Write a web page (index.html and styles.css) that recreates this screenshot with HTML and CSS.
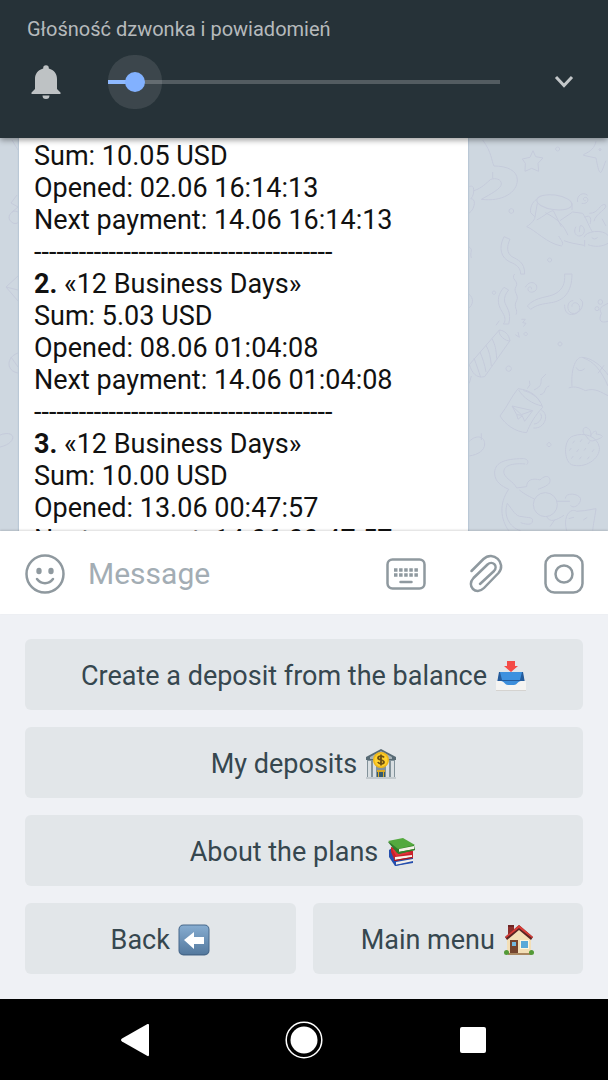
FILE: index.html
```html
<!DOCTYPE html>
<html lang="en">
<head>
<meta charset="utf-8">
<meta name="viewport" content="width=device-width, initial-scale=1">
<title>Deposits</title>
<link rel="stylesheet" href="styles.css">
</head>
<body>
<section class="volume" lang="pl">
  <label class="volume-label" for="volume">Głośność dzwonka i powiadomień</label>
  <div class="volume-row">
    <svg class="bell" viewBox="0 0 30 34" aria-hidden="true"><path d="M12.200 3.500V3a2.800 2.800 0 0 1 5.600 0v.5C23 4.900 26 8.800 26 14v10l3.500 3.600V29H.5v-1.400L4 24V14C4 8.800 7 4.900 12.200 3.500zM11.500 30.500h7a3.500 3.500 0 0 1-7 0z"/></svg>
    <input class="slider" id="volume" type="range" min="0" max="200" value="9">
    <button class="expand" type="button" aria-label="Rozwiń"><svg viewBox="0 0 20 14"><path d="M2 2l8 8.500L18 2"/></svg></button>
  </div>
</section>

<main class="chat">
  <svg class="wallpaper" viewBox="0 0 608 393" aria-hidden="true">
    <g transform="translate(440 -8) scale(.3333)">
      <path d="M128 30c28 38 26 62 34 78 40 0 70 14 70 42 0 38-46 66-108 58 28-16 60-32 60-46 0-16-18-18-32-14-14 12-26 26-50 34M158 126v20M279 62l8 18 22 4-15 16 2 24-21-9-20 9 1-24-9-13 23-5zM430 74c22-10 34-20 38-40M430 76l38 8c4 20 8 44 14 44 8-8 10-26 16-36M480 56a3 3 0 1 0 .1 0M353 51a6 6 0 1 0 .1 0M214 236a7 7 0 1 0 .1 0M329 384a6 6 0 1 0 .1 0M162 483a5 5 0 1 0 .1 0M257 607a5 5 0 1 0 .1 0M360 636a6 6 0 1 0 .1 0M206 708a8 8 0 1 0 .1 0M327 938a6 6 0 1 0 .1 0"/>
      <ellipse cx="343" cy="217" rx="53" ry="22" transform="rotate(8 343 217)"/>
      <path d="M290 208c-14 8-20 26-18 40l12 12M292 220l-8 46c-8 14-16 18-24 24 26 10 60 50 104 58 10-6 0-16-8-30M290 270c20-10 40-28 50-28l24 48M316 248c40 20 56 40 68 68M360 272l38-26 30 4c14 20 20 44 30 56M396 240v-20M372 332c20 8 40 10 60 14M434 262c20-12 20 10 16 20M448 250c30 0 30-30 48-26 10 12-30 26-34 50M425 220c20 4 24-16 12-18-10 0-8 12 0 10M413 216c-4-20 16-32 30-20M432 322a38 20 0 0 1 72-6M444 344c20 8 44 6 60-4M408 290c-12 20 6 36 20 24 12-12 0-32-8-26l-2 18M455 322q8 10 18 0M434 350v-20M486 266l12 22"/>
      <path d="M210 328l-18-8c-18 36-8 64 18 76 20 8 32 18 32 36h12c0-36-20-42-38-52-16-10-16-32-6-52zM224 432c-14 16 14 20 4 38-10 16 10 24 2 42-12 20 6 26-2 42M206 480l-14-8c-26 30-18 54-4 76 10 16 8 28 2 34h16c10-34-8-52-12-66-2-14 2-24 12-36zM256 472c12-24 38-14 34 4-4 14-28 14-26 0 2-8 14-6 10 2M374 432h22c0 54-24 80-62 86-26 4-44 6-62 20-4-2-6-8-10-10 26-30 64-24 86-38 20-12 28-30 26-58zM400 512c-20-2-22 34-4 38 20 4 30-16 18-28-8-8-20-2-18 8M374 524c-2 50 58 30 54-8l-8-10M465 536a6 6 0 1 0 12 0 6 6 0 1 0-12 0M474 516a7 7 0 1 0 14 0 7 7 0 1 0-14 0M504 520c-18 10-30 12-20 30-10 24 0 30 20 24M244 568h12l-8 10 10 2-8 10M226 614l12 8-4-16M168 586l10-14"/>
      <path d="M178 600l-90 104c8 24 20 42 46 36l76-108c-4-20-16-30-32-32zM178 600c-6 14 20 36 32 32M156 626c10 20 12 30 14 60M138 646c10 18 14 36 16 62M120 666c8 20 14 36 18 60M102 684c8 22 14 40 20 58M88 760l6-22M396 770c-4-60 14-88 28-88 30 0 60 24 84 58M386 774c20-8 38 2 50 8 30-10 48 6 70 16M430 684c30 10 52 34 74 84M408 712q10 18 26 4M474 730l18-24"/>
      <path d="M234 776c-20 24-32 54-54 82 16 26 46 48 80 50 10-26 24-50 48-76-10-30-34-52-74-56zM236 780c14 24 42 42 70 48M250 782c20 4 42 18 50 34M304 840c26 14 10 58-24 54M300 850c12 10-2 32-18 32M216 828l62 14-24 32-8-18-16-2zM216 828l28 26 34-12M230 854l4 14 12-10M262 776l8-12-2-12M282 780c26-12 20-22 22-34l14-14M300 794c20-2 10-22 28-26M88 934c22-22 46-14 46 8 0 20-20 32-46 36M124 930v-20M88 170c20-10 14 30 4 36 20 0 10 36-6 44M86 350c16 10 2 14 8 34M86 492c18 12 12 36 0 42"/>
      <path d="M400 918c-30 8-30 72-6 86 40 14 88-18 84-52-6-34-46-46-78-34zM440 920c-20-14-8-34 2-26 10 4 12 18 10 24 8-18 22-18 16-6 30 4 20 12-2 18-10 6-20 2-26-10M398 940l6-8M420 936l6-8M444 942l6-8M388 962l6-8M410 966l6-8M432 962l6-8M456 966l6-8M394 986l6-8M418 988l6-8M442 988l6-8"/>
      <path d="M260 1004c8-8 2-18-10-18-60 0-88 14-86 46 2 24 20 36 42 46-30 44-24 90 0 124M256 1002c-50-4-68 10-64 28 6 18 28 24 38 44l30-4c0-22 20-26 40-20 18-18 32-10 30 4 0 12-26 20-36 24M238 1080c20 16 32 20 46 28M202 1120c-12 34 4 72 40 82M202 1120c16 20 24 40 44 40 20 4 38 0 30 18-4 8-24 4-34 0M350 1114h40M376 1106c0-20 40-16 46 0 0 20-24 32-30 20M380 1202c-12-42 10-70 30-58l24-2 34-6c-4 30-8 46-10 66M386 1166l16-4M430 1170l12-8M320 1160c10 20 30 10 52-4M330 1190l14-20"/>
      <circle cx="316" cy="1124" r="36"/>
    </g>
    <g transform="translate(0 2)"><path d="M12 0l6 10M17 55l-6 8 7 4-6 5M18 72a6 6 0 1 0 1 10M18 136L6 147l12 14M6 147l12 3M18 213c-12 4-12 18 0 20M11 217l7 10M0 295c16-6 18 8 0 12"/></g>
  </svg>
  <article class="bubble">
    <p>Sum: 10.05 USD</p>
    <p>Opened: 02.06 16:14:13</p>
    <p>Next payment: 14.06 16:14:13</p>
    <p>----------------------------------------</p>
    <p><b>2.</b> «12 Business Days»</p>
    <p>Sum: 5.03 USD</p>
    <p>Opened: 08.06 01:04:08</p>
    <p>Next payment: 14.06 01:04:08</p>
    <p>----------------------------------------</p>
    <p><b>3.</b> «12 Business Days»</p>
    <p>Sum: 10.00 USD</p>
    <p>Opened: 13.06 00:47:57</p>
    <p>Next payment: 14.06 00:47:57</p>
  </article>
</main>

<form class="composer">
  <button class="tool" type="button" aria-label="Emoji"><svg viewBox="0 0 40 40"><circle cx="20" cy="20" r="18.500"/><path d="M12 25c4 5.500 12 5.500 16 0"/><g class="solid"><ellipse cx="14" cy="17" rx="2.700" ry="3.200"/><ellipse cx="26" cy="17" rx="2.700" ry="3.200"/></g></svg></button>
  <input class="message" type="text" placeholder="Message" aria-label="Message">
  <button class="tool" type="button" aria-label="Bot keyboard"><svg viewBox="0 0 40 40"><rect x="1.500" y="5.500" width="37" height="29" rx="5"/><path class="keys" d="M8 16h24M8 21h24"/><path d="M14.500 28h11"/></svg></button>
  <button class="tool" type="button" aria-label="Attach"><svg viewBox="0 0 40 40"><path d="M6.500 17L18.500 5C28-4 42 9 33.500 19L19 34C11 42 1 32 8.500 24L22.500 10.500c5-4.500 11 1.500 6.500 6.500L15 30"/></svg></button>
  <button class="tool" type="button" aria-label="Camera"><svg viewBox="0 0 40 40"><rect x="1.500" y="1.500" width="37" height="37" rx="9"/><circle cx="20" cy="20" r="8.500"/></svg></button>
</form>

<section class="keyboard">
  <button class="key wide" type="button">Create a deposit from the balance
    <svg class="emoji" viewBox="0 0 32 32" aria-hidden="true"><path fill="#245b9b" d="M4 12h24l2 11H2z"/><path fill="#3d91df" d="M5 12h22l-2 8H7z"/><path fill="#3d8edb" d="M2 21h28v5H2z"/><path fill="#f5f4f2" d="M1 21h5c3 0 4 4 7 4h6c3 0 4-4 7-4h5v10H1z"/><path fill="#d5d3d0" d="M1 30h30v1H1z"/><path fill="#f44b47" d="M12 1h8v5h3l-7 6-7-6h3z"/></svg>
  </button>
  <button class="key wide" type="button">My deposits
    <svg class="emoji" viewBox="0 0 32 32" aria-hidden="true"><path fill="#82929a" d="M2 11h28v19H2z"/><path fill="#586b75" d="M16 1L31 9v3H1V9z"/><path fill="#a6b2b8" d="M16 3l11 6v2H5V9z"/><path fill="#d9dfe2" d="M3 13h3v16H3zM8 13h3v16H8zM21 13h3v16h-3zM26 13h3v16h-3z"/><path fill="#345a70" d="M12 22h8v8h-8z"/><path fill="#d9aa25" d="M12 22h8v2h-8zM13 24h1v6h-1zM18 24h1v6h-1z"/><path fill="#c3cace" d="M1 29h30v2H1z"/><circle cx="16" cy="12" r="8" fill="#eeb718"/><circle cx="16" cy="12" r="6.500" fill="#ffd12d"/><path fill="none" stroke="#6d5012" stroke-width="1.800" d="M19 9.500c-1-2-6-2-6 .5s6 1.500 6 4-5 2.500-6 0M16 6.500v11"/></svg>
  </button>
  <button class="key wide" type="button">About the plans
    <svg class="emoji" viewBox="0 0 32 32" aria-hidden="true"><path fill="#254fae" d="M3 14l3-2 21 10v4l-18 4-6-9z"/><path fill="#f5f0e9" d="M10 26l17-3v3l-17 3z"/><path fill="#254fae" d="M9 29l18-4v2L9 30z"/><path fill="#c9212b" d="M5 11l22 4v7L9 25 5 16z"/><path fill="#e2343a" d="M6 13l20 4-16 3z"/><path fill="#f8f2e9" d="M9 21l17-2v2L9 24z"/><path fill="#a41820" d="M8 24l18-3v1L8 25z"/><path fill="#2f7b29" d="M2 6l26 3 1 5-16 4-2-1z"/><path fill="#54a93e" d="M2 5L17 2l12 7-17 4z"/><path fill="#f6f3e8" d="M13 13l15-3v3l-15 3z"/><path fill="#327e2a" d="M12 16l17-3v1l-17 4z"/></svg>
  </button>
  <button class="key" type="button">Back
    <svg class="emoji" viewBox="0 0 32 32" aria-hidden="true"><defs><linearGradient id="sky" x2="0" y2="1"><stop stop-color="#86acd0"/><stop offset="1" stop-color="#557a9f"/></linearGradient></defs><rect x=".5" y=".5" width="31" height="31" rx="5" fill="#48698b"/><rect x="1.500" y="1.500" width="29" height="28.500" rx="4" fill="url(#sky)"/><path fill="#fff" d="M6 16l10-8v5h10v7H16v5z"/></svg>
  </button>
  <button class="key" type="button">Main menu
    <svg class="emoji" viewBox="0 0 32 32" aria-hidden="true"><path fill="#8d2e2b" d="M5 2h6v9H5z"/><path fill="#6d2524" d="M5 1h6v2H5z"/><path fill="#f3dfb7" d="M4 13L16 4l12 9v17H4z"/><path fill="#5c2424" d="M16 1l14 12-2 3L16 6 4 16l-2-3z"/><path fill="#d93d38" d="M16 1l14 12-1 1L16 4 3 14l-1-1z"/><path fill="#75452f" d="M7 16h8v14H7z"/><path fill="#73b9df" d="M9 18h4v4H9z"/><path fill="#fff6df" d="M17 16h9v9h-9z"/><path fill="#5ba9d8" d="M18 17h7v7h-7z"/><path fill="#a98761" d="M5 29h23v2H5z"/><circle cx="3.500" cy="28.500" r="2.500" fill="#539a37"/><circle cx="28.500" cy="28.500" r="2.500" fill="#539a37"/></svg>
  </button>
</section>

<nav class="system">
  <button type="button" aria-label="Back"><svg viewBox="0 0 40 40"><path d="M7 18.500L32.500 4q1.500-.5 1.500 1v30q0 1.500-1.500 1L7 21.500q-2-1.500 0-3z"/></svg></button>
  <button type="button" aria-label="Home"><svg viewBox="0 0 40 40"><circle cx="20" cy="20" r="13.500"/><circle class="ring" cx="20" cy="20" r="17.800"/></svg></button>
  <button type="button" aria-label="Recent apps"><svg viewBox="0 0 40 40"><rect x="7" y="7" width="26" height="26" rx="2"/></svg></button>
</nav>
</body>
</html>
```
FILE: styles.css
```css
* { box-sizing: border-box; }
body {
  margin: 0;
  height: 100vh;
  display: flex;
  flex-direction: column;
  background: #eff1f5;
  font-family: Roboto, "Noto Sans", sans-serif;
}
button { border: 0; padding: 0; margin: 0; background: none; font: inherit; color: inherit; }
svg { display: block; }

.volume {
  flex: none;
  position: relative;
  z-index: 1;
  padding: 17px 27px 29px;
  background: #263238;
  color: #b6babc;
  box-shadow: 0 2px 6px rgba(0, 0, 0, .4);
}
.volume-label { display: block; font-size: 20px; line-height: 24px; }
.volume-row { display: flex; align-items: center; height: 54px; margin-top: 14px; }
.bell { width: 38px; height: 34px; fill: #bec2c4; }
.slider {
  flex: 1;
  min-width: 0;
  height: 20px;
  margin: 0 48px 0 43px;
  appearance: none;
  background: none;
}
.slider::-webkit-slider-runnable-track {
  height: 4px;
  background: linear-gradient(to right, #82b1ff 6%, #535c61 6%);
}
.slider::-webkit-slider-thumb {
  appearance: none;
  width: 20px;
  height: 20px;
  margin-top: -8px;
  border-radius: 50%;
  background: #82b1ff;
  box-shadow: 0 0 0 17px rgba(255, 255, 255, .1);
}
.expand { width: 33px; }
.expand svg { width: 20px; height: 14px; margin-left: 6px; fill: none; stroke: #c3c7c9; stroke-width: 3; }

.chat { flex: 1; min-height: 0; position: relative; overflow: hidden; background: #ced7e0; }
.wallpaper { position: absolute; top: 0; right: 0; width: 608px; fill: none; stroke: #c5cbdb; stroke-width: 1; }
.wallpaper g:first-child { stroke-width: 3; }
.bubble {
  position: relative;
  margin: 0 23% 0 19px;
  padding: 2px 15px;
  background: #fff;
  box-shadow: 0 0 1px 1px #bac8d6;
  color: #111;
  font-size: 27px;
  line-height: 32px;
}
.bubble p { margin: 0; white-space: nowrap; }

.composer {
  flex: none;
  position: relative;
  display: flex;
  align-items: center;
  gap: 39px;
  height: 83px;
  padding: 2px 24px 0 25px;
  background: #fff;
  box-shadow: 0 -1px 2px rgba(0, 0, 0, .15);
}
.tool svg { width: 40px; height: 40px; fill: none; stroke: #8f999f; stroke-width: 2.5; stroke-linecap: round; }
.tool .solid { fill: #8f999f; stroke: none; }
.tool .keys { stroke-width: 3.5; stroke-dasharray: 3.5 1.6; stroke-linecap: butt; }
.message {
  flex: 1;
  min-width: 0;
  margin-left: -16px;
  padding: 0;
  border: 0;
  outline: 0;
  background: none;
  font: 30px/40px Roboto, sans-serif;
}
.message::placeholder { color: #a3adb4; }

.keyboard {
  flex: none;
  display: grid;
  grid-template-columns: 1fr 1fr;
  gap: 17px;
  padding: 25px;
  background: #eff1f5;
}
.key {
  display: flex;
  align-items: center;
  justify-content: center;
  gap: 8px;
  min-height: 71px;
  padding-top: 2px;
  border-radius: 6px;
  background: #e2e6e9;
  color: #36474f;
  font-size: 27px;
  line-height: 32px;
}
.wide { grid-column: 1 / -1; }
.emoji { width: 32px; height: 32px; flex: none; }

.system {
  flex: none;
  display: flex;
  align-items: center;
  justify-content: center;
  gap: 129px;
  height: 81px;
  background: #000;
}
.system svg { width: 40px; height: 40px; fill: #fff; }
.system .ring { fill: none; stroke: #fff; stroke-width: 1.5; }
```
